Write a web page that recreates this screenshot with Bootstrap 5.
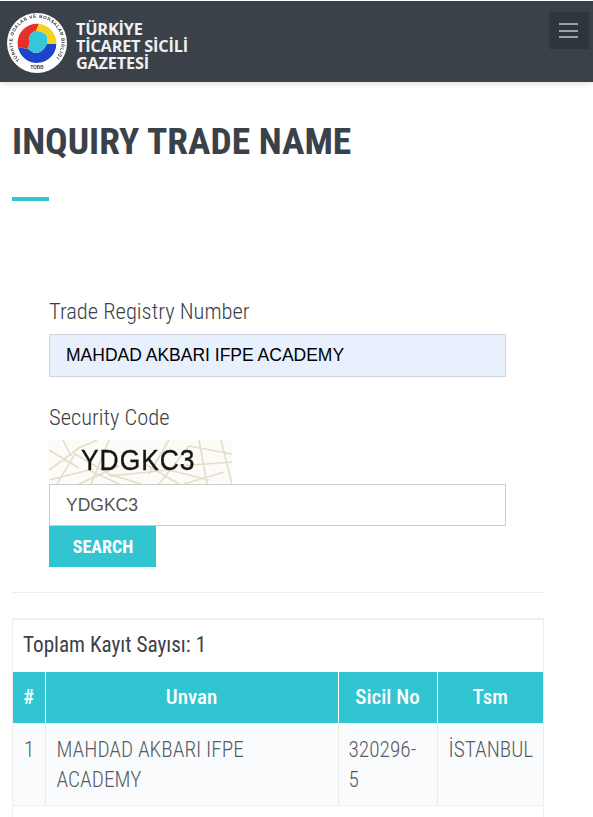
<!DOCTYPE html>
<html lang="en">
<head>
<meta charset="UTF-8">
<meta name="viewport" content="width=device-width, initial-scale=1.0">
<title>Inquiry Trade Name</title>
<link rel="stylesheet" href="https://cdn.jsdelivr.net/npm/bootstrap@5.3.3/dist/css/bootstrap.min.css">
<script src="https://cdn.jsdelivr.net/npm/bootstrap@5.3.3/dist/js/bootstrap.bundle.min.js"></script>
<style>
body{font-family:Roboto,"Liberation Sans",sans-serif;font-stretch:75%;color:#3a4149;background:#fff;overflow:hidden}
.topbar{height:82px;background:#3a4149;border-top:1px solid #fff;box-shadow:0 2px 6px rgba(0,0,0,.12);padding:0 4px 0 6px}
.brand-logo{margin-top:3px;filter:blur(.4px)}
.brand-text{font-family:"Open Sans",sans-serif;font-stretch:100%;font-weight:700;font-size:16.3px;line-height:17px;color:#eef0f1;margin:9px 0 0 8px;letter-spacing:-.2px}
.menu-btn{width:40px;height:37px;background:#2f353c;border:0;padding:0;margin-top:-22px}
.menu-btn span{display:block;width:19px;height:2px;background:#99a1a8;margin:4.5px 0 4.5px 10px}
.page-wrap{width:532px;margin-left:12px}
.page-title{font-size:37.5px;font-weight:700;line-height:44px;margin:37px 0 0;color:#3a4149}
.title-bar{width:37px;height:4px;background:#31c5d2;margin-top:34px}
.query-form{padding:96px 38px 0 37px}
.field-label{font-size:22.5px;font-weight:300;line-height:30px;margin:-1px 0 8px;color:#3a4149}
.field-label.second{margin-top:25px}
.field-input{height:43px;border:1px solid #ccc;border-radius:0;padding:0 16px;font-family:"Liberation Sans",sans-serif;font-stretch:100%;font-size:17.5px;color:#555}
.field-input.filled{background:#e8f0fe;color:#000;border-color:#ccd6e0}
.field-input.code{height:42px}
.captcha-img{display:block;width:183px;height:44px;filter:blur(.4px)}
.search-btn{width:107px;height:41px;background:#31c5d2;border:0;border-radius:0;color:#fff;font-stretch:75%;font-weight:700;font-size:18px;padding:0 0 0 1px}
.form-rule{margin:25px 0 25px;border:0;border-top:1px solid #eee;opacity:1}
.result-box{border:1px solid #eee;border-top-width:2px}
.total-row{font-size:21.2px;line-height:30px;padding:10px 10px 12px;font-weight:400;color:#3a4149}
.result-table{width:100%;border-collapse:collapse;margin:0;table-layout:fixed}
.result-table th{background:#31c5d2;color:#fff;text-align:center;font-size:21px;font-weight:500;height:51px;padding:0;border-left:1px solid #fff;vertical-align:middle}
.result-table th:first-child{border-left:0}
.result-table td{background:#fafbfc;font-weight:300;font-size:21.3px;line-height:30px;padding:12px 10px 10px 11px;border-left:1px solid #e9e9e9;border-bottom:1px solid #eee;vertical-align:top;color:#565c63}
.result-table td:first-child{border-left:0}
.result-table td.sicil-cell{padding:12px 14px 10px 10px}
.empty-row{height:30px}
</style>
</head>
<body>
<nav class="topbar d-flex justify-content-between align-items-center">
  <a class="d-flex align-items-center text-decoration-none" href="#">
    <svg class="brand-logo" width="62" height="62" viewBox="0 0 62 62">
      <defs><path id="ringPath" d="M14 48A24.500 24.500 0 1 1 48 48"/></defs>
      <circle cx="31" cy="31" r="30" fill="#fff"/>
      <text font-family="Liberation Sans, sans-serif" font-size="4.600" font-weight="700" fill="#333"><textPath href="#ringPath" textLength="112">TÜRKİYE ODALAR VE BORSALAR BİRLİĞİ</textPath></text>
      <text x="31" y="57" text-anchor="middle" font-family="Liberation Sans, sans-serif" font-size="4.600" font-weight="700" fill="#333">TOBB</text>
      <path d="M12 35A19.3 19.3 0 0 0 50.300 32L41 32Q36 42 28 41L22 37Z" fill="#1d44c8"/>
      <path d="M12 35A19.3 19.3 0 0 1 33 11.800L30 19C24 20 22 26 24 29L22 37Z" fill="#e8302a"/>
      <path d="M33 11.800A19.300 19.300 0 0 1 50.300 32L41 32L41 24C38 20 33 19 30 19Z" fill="#f6d21e"/>
      <path d="M30 19C33 19 38 20 41 24L41 32Q36 42 28 41L22 37L24 29C22 26 24 20 30 19Z" fill="#35c6d8"/>
    </svg>
    <span class="brand-text">TÜRKİYE<br>TİCARET SİCİLİ<br>GAZETESİ</span>
  </a>
  <button class="menu-btn" type="button" aria-label="Menu"><span></span><span></span><span></span></button>
</nav>
<main class="page-wrap">
  <h1 class="page-title">INQUIRY TRADE NAME</h1>
  <div class="title-bar"></div>
  <form class="query-form">
    <div class="field-label">Trade Registry Number</div>
    <input class="form-control field-input filled" type="text" value="MAHDAD AKBARI IFPE ACADEMY">
    <div class="field-label second">Security Code</div>
    <svg class="captcha-img" viewBox="0 0 183 44">
      <rect width="183" height="44" fill="#fcfbf8"/>
      <g fill="none" stroke="#e3dec6" stroke-width="1.6">
        <path d="M0 30L30 8L48 0M8 44L26 14L60 34L92 44M0 10L30 28M60 0L42 44M0 40L40 30L70 44M14 0L22 16M96 24L130 44M110 44L140 6L183 14M150 0L158 44M130 26L183 22M172 0L183 44M120 0L100 34M60 36L120 30L160 40M135 44L175 32M70 26L30 44"/>
      </g>
      <text transform="translate(32 30) scale(.88 1)" font-family="Liberation Sans, sans-serif" font-size="30" fill="#151515" stroke="#151515" stroke-width=".4" textLength="129">YDGKC3</text>
    </svg>
    <input class="form-control field-input code" type="text" value="YDGKC3">
    <button class="btn search-btn d-block" type="button">SEARCH</button>
  </form>
  <hr class="form-rule">
  <div class="result-box">
    <div class="total-row">Toplam Kayıt Sayısı: 1</div>
    <table class="result-table">
      <colgroup><col style="width:32px"><col style="width:293px"><col style="width:99px"><col></colgroup>
      <thead><tr><th>#</th><th>Unvan</th><th>Sicil No</th><th>Tsm</th></tr></thead>
      <tbody>
        <tr><td>1</td><td>MAHDAD AKBARI IFPE ACADEMY</td><td class="sicil-cell">320296-5</td><td>İSTANBUL</td></tr>
      </tbody>
    </table>
    <div class="empty-row"></div>
  </div>
</main>
</body>
</html>
